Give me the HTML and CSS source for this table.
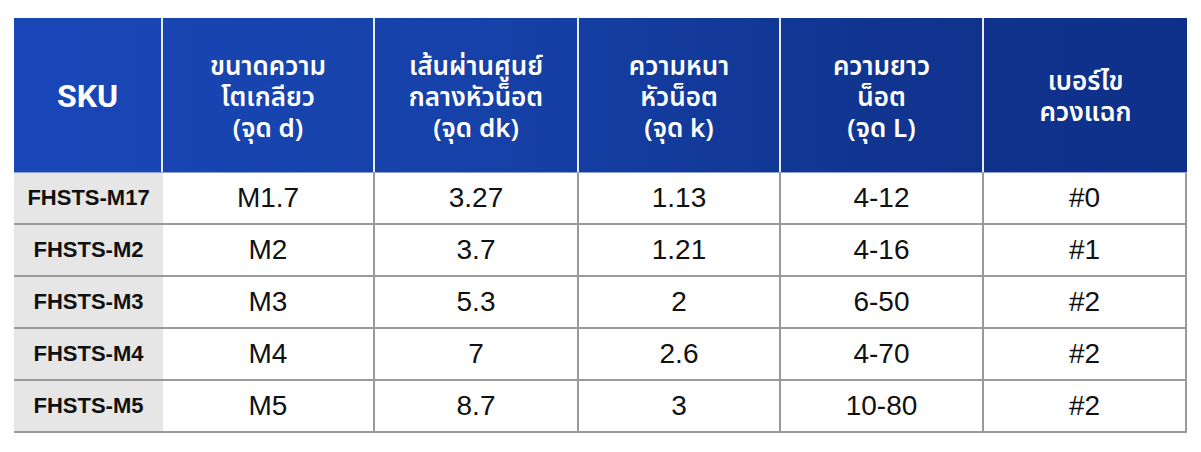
FILE: index.html
```html
<!DOCTYPE html>
<html lang="th">
<head>
<meta charset="utf-8">
<link rel="stylesheet" href="styles.css">
</head>
<body>
<div class="table">
  <div class="row head">
    <div class="cell sku-h">SKU</div>
    <div class="cell">ขนาดความ<br>โตเกลียว<br>(จุด d)</div>
    <div class="cell">เส้นผ่านศูนย์<br>กลางหัวน็อต<br>(จุด dk)</div>
    <div class="cell">ความหนา<br>หัวน็อต<br>(จุด k)</div>
    <div class="cell">ความยาว<br>น็อต<br>(จุด L)</div>
    <div class="cell">เบอร์ไข<br>ควงแฉก</div>
  </div>
  <div class="row body">
    <div class="cell sku">FHSTS-M17</div><div class="cell">M1.7</div><div class="cell">3.27</div><div class="cell">1.13</div><div class="cell">4-12</div><div class="cell">#0</div>
  </div>
  <div class="row body">
    <div class="cell sku">FHSTS-M2</div><div class="cell">M2</div><div class="cell">3.7</div><div class="cell">1.21</div><div class="cell">4-16</div><div class="cell">#1</div>
  </div>
  <div class="row body">
    <div class="cell sku">FHSTS-M3</div><div class="cell">M3</div><div class="cell">5.3</div><div class="cell">2</div><div class="cell">6-50</div><div class="cell">#2</div>
  </div>
  <div class="row body">
    <div class="cell sku">FHSTS-M4</div><div class="cell">M4</div><div class="cell">7</div><div class="cell">2.6</div><div class="cell">4-70</div><div class="cell">#2</div>
  </div>
  <div class="row body">
    <div class="cell sku">FHSTS-M5</div><div class="cell">M5</div><div class="cell">8.7</div><div class="cell">3</div><div class="cell">10-80</div><div class="cell">#2</div>
  </div>
</div>
</body>
</html>
```
FILE: styles.css
```css
* { box-sizing: border-box; }
html, body { margin: 0; padding: 0; background: #fff; }
body { font-family: "Noto Sans", "Noto Sans Thai", "Noto Sans Thai Looped", "DejaVu Sans", sans-serif; }
.table {
  margin: 18px 0 0 14px;
  width: 1173px;
  display: flex;
  flex-direction: column;
}
.row {
  display: grid;
  grid-template-columns: 149px 212px 204px 202px 203px 203px;
}
.cell {
  display: flex;
  align-items: center;
  justify-content: center;
  text-align: center;
}
.head {
  height: 155px;
  background: linear-gradient(90deg, #1a47b8 0%, #1641a8 40%, #10348f 75%, #0e3089 100%);
  border-bottom: 1px solid #8ea1d6;
  color: #fff;
  font-weight: 600;
  font-size: 26px;
  line-height: 31px;
}
.head .cell { border-right: 2px solid #e6ebf7; padding-top: 2px; }
.head .cell:last-child { border-right: none; }
.head .sku-h { font-family: "Roboto", "Liberation Sans", sans-serif; font-weight: 700; font-size: 32px; }
.body {
  height: 52px;
  border-bottom: 2px solid #9a9a9a;
  color: #111;
  font-family: "Liberation Sans", sans-serif;
  font-size: 28px;
}
.body .cell { border-right: 2px solid #9a9a9a; }
.body .cell.sku {
  border-right: none;
  background: #e6e6e6;
  font-weight: 700;
  font-size: 22px;
  color: #111;
}
```
